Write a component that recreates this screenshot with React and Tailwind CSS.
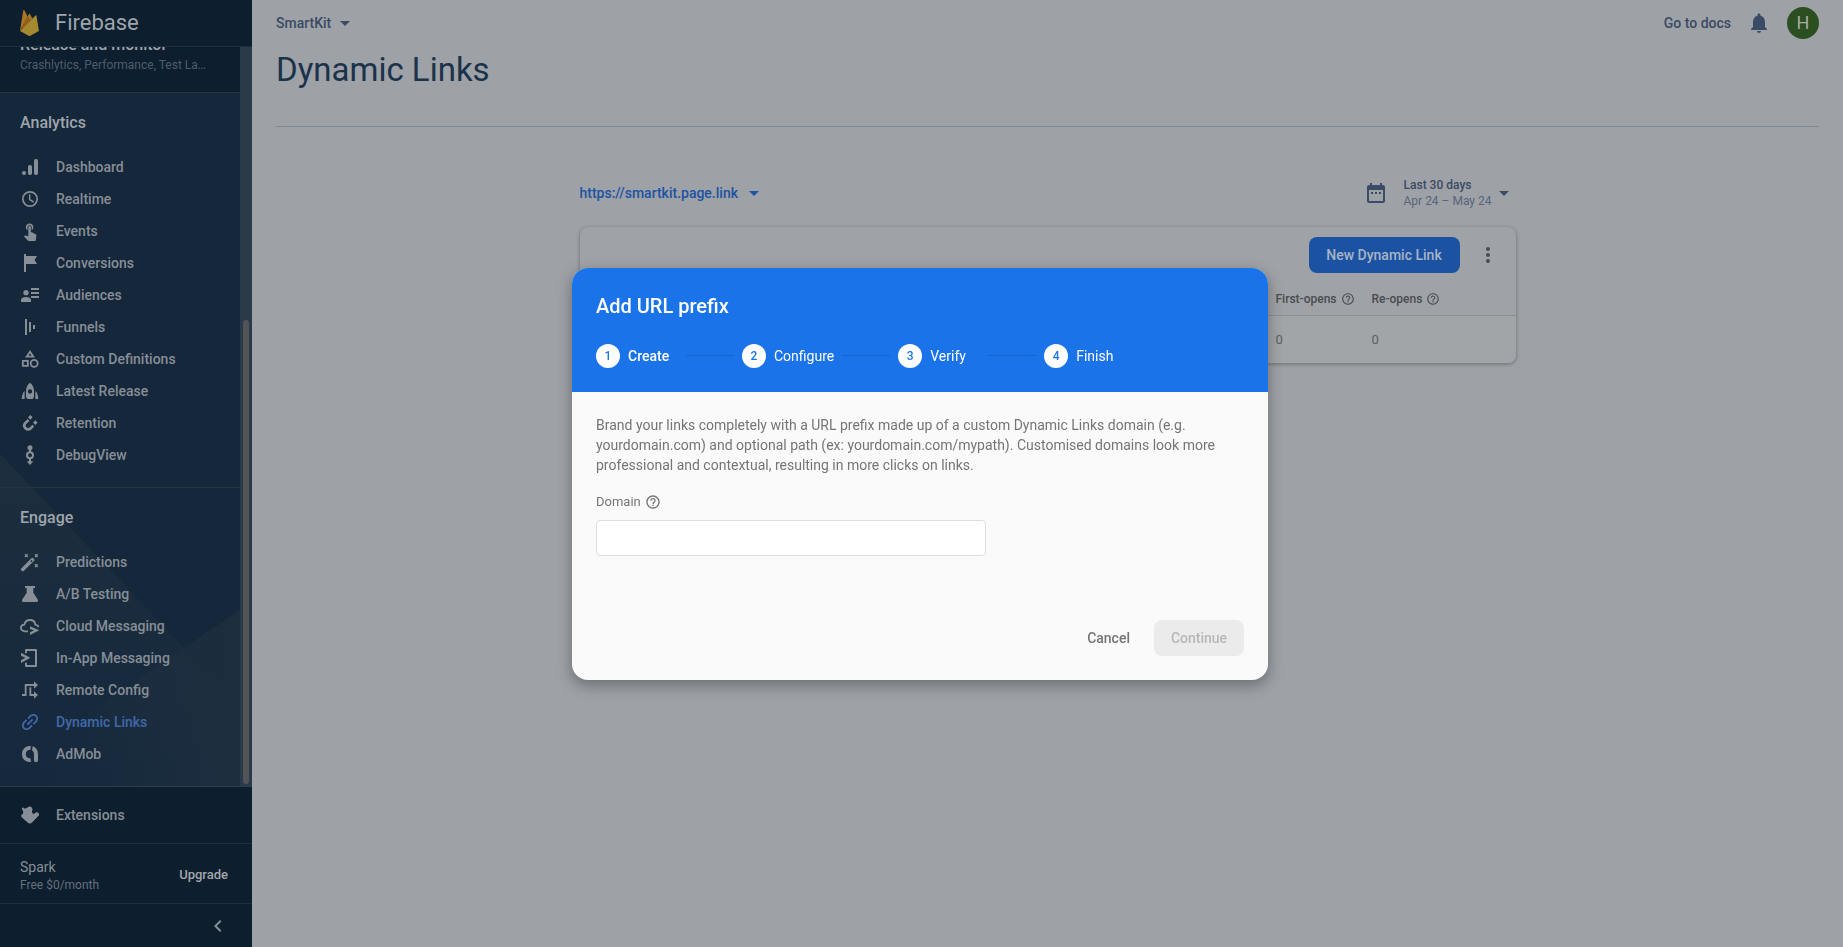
import React from "react";
import {
  MdArrowDropDown,
  MdChevronLeft,
  MdDateRange,
  MdHelpOutline,
  MdMoreVert,
  MdNotifications,
  MdTouchApp,
} from "react-icons/md";

function Glyph({ children }) {
  return (
    <svg viewBox="0 0 60 60" className="size-5 shrink-0" fill="currentColor" aria-hidden="true">
      {children}
    </svg>
  );
}

const line = { fill: "none", stroke: "currentColor" };

const icons = {
  dashboard: (
    <Glyph>
      <circle cx="12" cy="48" r="6" />
      <rect x="24" y="24" width="12" height="30" rx="5" />
      <rect x="42" y="6" width="12" height="48" rx="5" />
    </Glyph>
  ),
  realtime: (
    <Glyph>
      <circle cx="30" cy="30" r="21.5" {...line} strokeWidth="5" />
      <path d="M29 16v16l12 7" {...line} strokeWidth="4.5" />
    </Glyph>
  ),
  events: <MdTouchApp className="size-5 shrink-0" aria-hidden="true" />,
  conversions: (
    <Glyph>
      <path d="M12 3h6v6h33l-7 12 7 12H18v24h-6z" />
    </Glyph>
  ),
  audiences: (
    <Glyph>
      <circle cx="18" cy="23" r="8" />
      <path d="M3 51v-6c0-5 7-9 15-9s15 4 15 9v6z" />
      <path d="M33 9h24v6H33zM33 21h24v6H33zM33 33h24v6H33z" />
    </Glyph>
  ),
  funnels: (
    <Glyph>
      <path d="M15 6h6v48h-6zM27 15h6v30h-6zM39 24h6v12h-6z" />
    </Glyph>
  ),
  definitions: (
    <Glyph>
      <path d="M30 8 20 23h20z" {...line} strokeWidth="5.5" />
      <rect x="8.500" y="35.500" width="15" height="15" {...line} strokeWidth="5.5" />
      <circle cx="42.500" cy="43" r="10.500" {...line} strokeWidth="5.5" />
    </Glyph>
  ),
  release: (
    <Glyph>
      <path
        fillRule="evenodd"
        d="M30 5c9 7 12 16 12 26v17l-4 6H22l-4-6V31C18 21 21 12 30 5zm0 20a6.500 6.500 0 1 0 0 13 6.500 6.500 0 1 0 0-13z"
      />
      <path d="M14 30v24H5c1-10 3-20 9-24zM46 30v24h9c-1-10-3-20-9-24z" />
    </Glyph>
  ),
  retention: (
    <Glyph>
      <path d="M26 21 15 31a11.500 11.500 0 0 0 16 16l9-9" {...line} strokeWidth="8" />
      <path d="m31 6 7 7-7 7-7-7zM46 22l7 7-7 7-7-7z" />
    </Glyph>
  ),
  debug: (
    <Glyph>
      <circle cx="30" cy="8" r="7.500" />
      <path d="M27 12h6v10h-6zM27 40h6v12h-6z" />
      <circle cx="30" cy="31" r="9" {...line} strokeWidth="6" />
      <path d="M20 49h20L30 60z" />
    </Glyph>
  ),
  predictions: (
    <Glyph>
      <path
        fillRule="evenodd"
        d="M3 50 34 19c2-2 4-2 6 0l2 2c2 2 2 4 0 6L11 57c-2 2-4 1-5 0l-3-3c-1-1-1-3 0-4zm28-23 3 4 4-4-3-3z"
      />
      <path
        d="m15 7 8 8m0-8-8 8M45 7l8 8m0-8-8 8M45 37l8 8m0-8-8 8"
        {...line}
        strokeWidth="4"
      />
    </Glyph>
  ),
  testing: (
    <Glyph>
      <path d="M15 6h30v6h-5v14l14 22c1 4-1 6-4 6H10c-3 0-5-2-4-6l14-22V12h-5z" />
    </Glyph>
  ),
  cloud: (
    <Glyph>
      <path
        d="M24 46H14C6 45 2 40 3 34c1-5 5-8 10-8 2-9 9-14 17-14 9 0 15 6 16 14 5 1 8 3 10 7"
        {...line}
        strokeWidth="5.5"
      />
      <path d="m30 31 28 12-28 14v-8l12-6-12-4z" />
    </Glyph>
  ),
  inapp: (
    <Glyph>
      <path d="M18 16V6h30v48H18V44" {...line} strokeWidth="6" strokeLinejoin="round" />
      <path d="m3 14 28 15L3 45v-8l13-8-13-6z" />
    </Glyph>
  ),
  remote: (
    <Glyph>
      <path d="M6 45h11V15h26M31 22v23h12" {...line} strokeWidth="5.500" />
      <path d="m42 4 12 11-12 11zM42 34l12 11-12 11z" />
    </Glyph>
  ),
  links: (
    <Glyph>
      <path
        transform="translate(30 30) rotate(-45) scale(2.85) translate(-12 -12)"
        d="M3.900 12c0-1.710 1.390-3.100 3.100-3.100h4V7H7c-2.760 0-5 2.240-5 5s2.240 5 5 5h4v-1.900H7c-1.710 0-3.100-1.390-3.100-3.100zM8 13h8v-2H8v2zm9-6h-4v1.900h4c1.710 0 3.100 1.390 3.100 3.100s-1.390 3.100-3.100 3.100h-4V17h4c2.760 0 5-2.240 5-5s-2.240-5-5-5z"
      />
    </Glyph>
  ),
  admob: (
    <Glyph>
      <path d="M32 12.500C20 10 11.500 19 11.500 30.500S21 50 32 48" {...line} strokeWidth="11.5" />
      <path d="M38 7c10 3 16 11 16 23v19a6 6 0 0 1-12 0V31c0-6-2-9-6-12z" />
    </Glyph>
  ),
  extensions: (
    <Glyph>
      <path d="M7 14C4 10 7 6 11 8c3 4 9 3 12-1 4-4 11-3 13 2l2 5c-4 4-2 13 4 12l7-4c4-2 10 3 8 9L37 52c-5 5-11 5-15 0L5 37c-3-5-1-8 3-10 3-4 2-9-1-13z" />
    </Glyph>
  ),
};

const sections = [
  {
    title: "Analytics",
    items: [
      ["Dashboard", "dashboard"],
      ["Realtime", "realtime"],
      ["Events", "events"],
      ["Conversions", "conversions"],
      ["Audiences", "audiences"],
      ["Funnels", "funnels"],
      ["Custom Definitions", "definitions"],
      ["Latest Release", "release"],
      ["Retention", "retention"],
      ["DebugView", "debug"],
    ],
  },
  {
    title: "Engage",
    items: [
      ["Predictions", "predictions"],
      ["A/B Testing", "testing"],
      ["Cloud Messaging", "cloud"],
      ["In-App Messaging", "inapp"],
      ["Remote Config", "remote"],
      ["Dynamic Links", "links"],
      ["AdMob", "admob"],
    ],
  },
];

function FirebaseLogo() {
  return (
    <svg viewBox="0 0 256 351" className="h-[26px] w-[19px]" aria-hidden="true">
      <path
        fill="#a6781f"
        d="m0 283 2-3L102.500 89.500l.2-2L58.500 4.400C54.800-2.600 44.300-.8 43.100 7z"
      />
      <path
        fill="#a47425"
        d="m135 150.400 33-33.800-33-62.900c-3.100-6-11.900-6-15 0l-17.600 33.600v2.900z"
      />
      <path fill="#a05a1b" d="m0 283 1-1 3.500-1.400 128.400-128 1.700-4.400-32.100-61.100z" />
      <path
        fill="#a4892e"
        d="m139.100 347.600 116.300-64.900-33.200-204.500c-1-6.400-8.900-8.900-13.500-4.300L0 283l115.600 64.500a24.100 24.100 0 0 0 23.500.1"
      />
    </svg>
  );
}

function Sidebar() {
  return (
    <aside className="flex w-[252px] shrink-0 flex-col bg-[#0d1e2f] text-[#878e96]">
      <a
        href="#home"
        className="flex h-[47px] shrink-0 items-center gap-4 border-b border-[#1d303e] px-5 text-[#9fa5ab]"
      >
        <FirebaseLogo />
        <span className="text-[22px] leading-6">Firebase</span>
      </a>

      <div className="flex min-h-0 flex-1 border-b border-[#2c3f4e]">
        <nav className="relative flex min-w-0 flex-1 flex-col justify-end overflow-hidden bg-[#15273b]">
          <svg
            className="absolute inset-x-0 bottom-0 h-[332px] w-full"
            viewBox="0 0 240 332"
            preserveAspectRatio="none"
            aria-hidden="true"
          >
            <defs>
              <linearGradient id="slope" x1="0" y1="0" x2="0" y2="1">
                <stop offset="0" stopColor="#1d2f3e" />
                <stop offset="1" stopColor="#15283d" />
              </linearGradient>
              <linearGradient id="ridge" x1="0" y1="0" x2="1" y2="0">
                <stop offset="0.2" stopColor="#1e303f" stopOpacity="0" />
                <stop offset="1" stopColor="#1e303f" stopOpacity="0.8" />
              </linearGradient>
            </defs>
            <path d="M0 0 240 253v79H0z" fill="url(#slope)" />
            <path d="M240 156 55 282 0 332h240z" fill="url(#ridge)" />
          </svg>
          <a href="#release" className="relative block bg-[#0d1e2f] px-5 pb-[17px]">
            <span className="block text-base leading-5 font-medium text-[#9fa5ab]">
              Release and monitor
            </span>
            <span className="block truncate text-xs leading-5 text-[#4f5c69]">
              Crashlytics, Performance, Test La…
            </span>
          </a>
          {sections.map((section) => (
            <section key={section.title} className="relative border-t border-[#223440] pb-4">
              <h2 className="px-5 pt-5 pb-[18px] text-base leading-5 font-medium text-[#9fa5ab]">
                {section.title}
              </h2>
              <ul>
                {section.items.map(([label, icon]) => (
                  <li key={label}>
                    <a
                      href={"#" + icon}
                      className={
                        icon === "links"
                          ? "flex h-8 items-center gap-4 px-5 text-sm font-medium text-[#4168aa]"
                          : "flex h-8 items-center gap-4 px-5 text-sm font-medium"
                      }
                    >
                      {icons[icon]}
                      {label}
                    </a>
                  </li>
                ))}
              </ul>
            </section>
          ))}
        </nav>
        <div className="flex w-3 shrink-0 flex-col items-center justify-end bg-[#2a3a49] pb-0.5">
          <div className="h-[63%] w-1.5 rounded-full bg-[#525458]" />
        </div>
      </div>

      <a
        href="#extensions"
        className="flex h-[57px] shrink-0 items-center gap-4 border-b border-[#1d2f3f] px-5 text-sm font-medium"
      >
        {icons.extensions}
        Extensions
      </a>
      <div className="flex h-[60px] shrink-0 items-center justify-between border-b border-[#1d2f3f] pt-0.5 pr-6 pl-5">
        <div>
          <p className="text-sm leading-5">Spark</p>
          <p className="text-xs leading-4 text-[#66707b]">Free $0/month</p>
        </div>
        <a href="#upgrade" className="text-[13px] font-medium text-[#a3a7ab]">
          Upgrade
        </a>
      </div>
      <div className="flex h-[43px] shrink-0 items-center justify-end pr-[22px]">
        <button type="button" aria-label="Collapse menu">
          <MdChevronLeft className="size-6" />
        </button>
      </div>
    </aside>
  );
}

function ColumnHead({ children }) {
  return (
    <span className="flex items-center gap-1">
      {children}
      <MdHelpOutline className="size-3.5 text-[#4c4f54]" aria-hidden="true" />
    </span>
  );
}

function LinksPage() {
  return (
    <main className="min-w-0 flex-1 bg-[#9ea1a6] px-6 text-[#3a4b65]">
      <header className="flex h-[46px] items-center justify-between">
        <button type="button" className="flex items-center gap-0.5 text-sm font-medium">
          SmartKit
          <MdArrowDropDown className="size-6" aria-hidden="true" />
        </button>
        <div className="flex items-center gap-4">
          <a href="#docs" className="text-sm font-medium">
            Go to docs
          </a>
          <button type="button" aria-label="Notifications">
            <MdNotifications className="size-6" />
          </button>
          <button
            type="button"
            aria-label="Account"
            className="size-8 rounded-full bg-[#2b4f21] text-lg leading-8 text-[#a5ada3]"
          >
            H
          </button>
        </div>
      </header>
      <div className="border-b border-[#7c8997] pb-9">
        <h1 className="pt-1 text-[33px] leading-10 text-[#1b334a]">Dynamic Links</h1>
      </div>

      <div className="mx-auto mt-12 max-w-[936px]">
        <div className="flex h-9 items-center justify-between">
          <button
            type="button"
            className="flex items-center gap-1 text-sm font-medium text-[#1d53a3]"
          >
            https://smartkit.page.link
            <MdArrowDropDown className="size-6" aria-hidden="true" />
          </button>
          <button type="button" className="flex items-center text-left">
            <MdDateRange className="mr-4 size-6" aria-hidden="true" />
            <span className="text-xs leading-4">
              <span className="block font-medium">Last 30 days</span>
              <span className="block text-[#56657b]">Apr 24 – May 24</span>
            </span>
            <MdArrowDropDown className="size-6" aria-hidden="true" />
          </button>
        </div>

        <section className="mt-4 overflow-hidden rounded-lg bg-[#9fa2a6] text-[#494c50] shadow-[0_1px_3px_1px_rgba(60,64,67,0.35)]">
          <div className="flex h-14 items-center justify-end gap-4 pr-4">
            <button
              type="button"
              className="h-9 min-w-[151px] rounded-lg bg-[#1b53a2] px-4 text-sm font-medium text-[#a8b3c6]"
            >
              New Dynamic Link
            </button>
            <button type="button" aria-label="More options">
              <MdMoreVert className="size-6" />
            </button>
          </div>
          <table className="w-full table-fixed text-left text-xs">
            <thead>
              <tr className="h-8 border-b border-[#8b8e92]">
                <th aria-label="Link" />
                <th className="w-24 font-medium">
                  <ColumnHead>First-opens</ColumnHead>
                </th>
                <th className="w-36 font-medium">
                  <ColumnHead>Re-opens</ColumnHead>
                </th>
              </tr>
            </thead>
            <tbody>
              <tr className="h-12 bg-[#a2a5a8] text-[13px] text-[#5b5e62]">
                <td />
                <td>0</td>
                <td>0</td>
              </tr>
            </tbody>
          </table>
        </section>
      </div>
    </main>
  );
}

const steps = ["Create", "Configure", "Verify", "Finish"];

function PrefixDialog() {
  return (
    <div className="fixed inset-0 flex items-center justify-center pr-[3px]">
      <form
        role="dialog"
        aria-labelledby="dialog-title"
        className="w-[696px] overflow-hidden rounded-2xl bg-[#fafafa] shadow-[0_5px_14px_1px_rgba(40,44,50,0.4)]"
      >
        <div className="bg-[#1a73e8] px-6 pt-6 pb-6 text-white">
          <h2 id="dialog-title" className="text-xl leading-7 font-medium">
            Add URL prefix
          </h2>
          <ol className="mt-6 flex items-center text-sm">
            {steps.map((step, i) => (
              <li key={step} className="flex items-center">
                {i > 0 && <span className="mx-2 h-px w-12 bg-[#1664cf]" />}
                <span className="mr-2 size-6 rounded-full bg-white text-center text-xs leading-6 font-medium text-[#1a73e8]">
                  {i + 1}
                </span>
                <span className={i === 0 ? "min-w-[50px] font-medium" : "min-w-[50px]"}>
                  {step}
                </span>
              </li>
            ))}
          </ol>
        </div>
        <div className="px-6 pt-[23px] pb-6 text-sm text-[#757575]">
          <p className="leading-5">
            Brand your links completely with a URL prefix made up of a custom Dynamic Links domain
            (e.g. yourdomain.com) and optional path (ex: yourdomain.com/mypath). Customised domains
            look more professional and contextual, resulting in more clicks on links.
          </p>
          <label
            htmlFor="domain"
            className="mt-[17px] flex items-center gap-1 text-[13px] leading-5"
          >
            Domain
            <MdHelpOutline className="size-4" aria-hidden="true" />
          </label>
          <input
            id="domain"
            type="text"
            className="mt-2 block h-9 w-[390px] rounded border border-[#dedede] bg-white px-3 outline-none"
          />
          <div className="mt-16 flex items-center justify-end gap-2 font-medium">
            <button type="button" className="h-9 px-4">
              Cancel
            </button>
            <button
              type="submit"
              disabled
              className="h-9 min-w-[90px] rounded-lg bg-[#ebebeb] px-4 text-[#b7b7b7]"
            >
              Continue
            </button>
          </div>
        </div>
      </form>
    </div>
  );
}

export default function App() {
  return (
    <div className="flex h-screen overflow-hidden font-[Roboto,sans-serif]">
      <Sidebar />
      <LinksPage />
      <PrefixDialog />
    </div>
  );
}
